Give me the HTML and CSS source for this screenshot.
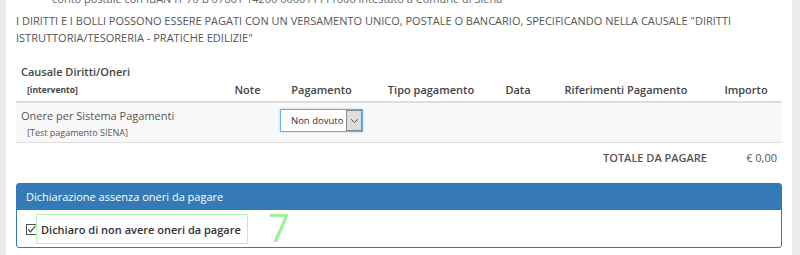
FILE: index.html
```html
<!DOCTYPE html>
<html lang="it">

<head>
    <meta charset="UTF-8">
    <meta name="viewport" content="width=device-width, initial-scale=1.0">
    <title>Pagamento oneri</title>
    <link rel="stylesheet" href="styles.css">
</head>

<body>
    <div class="side side-left"></div>
    <main class="content">
        <p class="cut-line">conto postale con IBAN IT 70 B 07601 14200 000011111000 intestato a Comune di Siena</p>
        <p class="notice">I DIRITTI E I BOLLI POSSONO ESSERE PAGATI CON UN VERSAMENTO UNICO, POSTALE O BANCARIO, SPECIFICANDO NELLA CAUSALE "DIRITTI ISTRUTTORIA/TESORERIA - PRATICHE EDILIZIE"</p>

        <table class="oneri">
            <colgroup>
                <col class="c-causale">
                <col class="c-note">
                <col class="c-pag">
                <col class="c-tipo">
                <col class="c-data">
                <col class="c-rif">
                <col class="c-imp">
            </colgroup>
            <thead>
                <tr>
                    <th class="left">Causale Diritti/Oneri<br><span class="sub">[intervento]</span></th>
                    <th>Note</th>
                    <th>Pagamento</th>
                    <th>Tipo pagamento</th>
                    <th>Data</th>
                    <th>Riferimenti Pagamento</th>
                    <th>Importo</th>
                </tr>
            </thead>
            <tbody>
                <tr class="row-onere">
                    <td>Onere per Sistema Pagamenti<br><span class="sub-note">[Test pagamento SIENA]</span></td>
                    <td></td>
                    <td>
                        <div class="select">
                            <span class="select-value">Non dovuto</span>
                            <span class="select-arrow">
                                <svg width="9" height="6" viewBox="0 0 9 6"><path d="M1 1.2 L4.5 4.5 L8 1.2" fill="none" stroke="#555" stroke-width="1"/></svg>
                            </span>
                        </div>
                    </td>
                    <td></td>
                    <td></td>
                    <td></td>
                    <td></td>
                </tr>
                <tr class="row-total">
                    <td colspan="6" class="right">TOTALE DA PAGARE</td>
                    <td class="right">€ 0,00</td>
                </tr>
            </tbody>
        </table>

        <section class="panel">
            <div class="panel-heading">Dichiarazione assenza oneri da pagare</div>
            <div class="panel-body">
                <label class="check">
                    <svg width="11" height="11" viewBox="0 0 11 11"><rect x="0.5" y="0.5" width="10" height="10" fill="#fff" stroke="#555"/><path d="M2.2 5.4 L4.4 7.8 L9.4 2" fill="none" stroke="#333" stroke-width="1.1"/></svg>
                    <span>Dichiaro di non avere oneri da pagare</span>
                </label>
                <div class="mark-box"></div>
                <div class="mark-num">7</div>
            </div>
        </section>
    </main>
    <div class="side side-right"></div>
</body>

</html>
```

FILE: styles.css
```css
*,
*::after,
*::before {
    box-sizing: border-box;
    padding: 0;
    margin: 0;
}

body {
    display: flex;
    height: 255px;
    overflow: hidden;
    background-color: #fff;
    font-family: "Open Sans", Arial, sans-serif;
    color: #555;
}

.side {
    background-color: #ebebeb;
    flex: none;
}

.side-left {
    width: 6px;
}

.side-right {
    width: 8px;
}

.content {
    flex: 1;
    padding: 0 10px;
}

.cut-line {
    margin-top: -8px;
    padding-left: 36px;
    font-size: 11px;
    line-height: 14px;
    color: #666;
}

.notice {
    margin-top: 6px;
    font-size: 11px;
    line-height: 17px;
    color: #555;
}

/* Tabella oneri */
.oneri {
    width: 100%;
    margin-top: 17px;
    border-collapse: collapse;
    font-size: 11px;
    table-layout: fixed;
}

.c-causale { width: 204px; }
.c-note { width: 55px; }
.c-pag { width: 93px; }
.c-tipo { width: 126px; }
.c-data { width: 48px; }
.c-rif { width: 168px; }
.c-imp { width: 72px; }

.oneri th {
    font-weight: 600;
    color: #444;
    text-align: center;
    vertical-align: bottom;
    padding: 0 5px 3px;
    line-height: 17px;
    border-bottom: 2px solid #ddd;
}

.oneri th.left {
    text-align: left;
}

.oneri th .sub {
    font-size: 8.5px;
    font-weight: 700;
    padding-left: 6px;
}

.oneri td {
    padding: 0 5px;
    vertical-align: top;
}

.row-onere td {
    background-color: #f9f9f9;
    border-bottom: 1px solid #ddd;
    padding-top: 5px;
    height: 40px;
    line-height: 16px;
    color: #555;
}

.sub-note {
    font-size: 9px;
    padding-left: 6px;
    line-height: 17px;
}

.select {
    display: flex;
    width: 83px;
    height: 23px;
    margin-top: 1px;
    border: 1px solid #66afe9;
    background-color: #fff;
    box-shadow: 0 0 2px rgba(102, 175, 233, 0.6);
}

.select-value {
    flex: 1;
    padding-left: 10px;
    line-height: 21px;
    font-size: 9.5px;
    color: #333;
    white-space: nowrap;
}

.select-arrow {
    width: 16px;
    display: flex;
    align-items: center;
    justify-content: center;
    background-color: #ddd;
    border: 1px solid #888;
}

.row-total td {
    font-size: 11px;
    padding-top: 7px;
    height: 30px;
    color: #555;
}

.row-total td.right {
    text-align: right;
}

.row-total td:first-child {
    font-weight: 600;
    padding-right: 3px;
}

/* Pannello dichiarazione */
.panel {
    margin-top: 11px;
    border: 1px solid #337ab7;
    border-radius: 3px;
}

.panel-heading {
    height: 26px;
    background-color: #337ab7;
    color: #fff;
    font-size: 11px;
    line-height: 25px;
    padding-left: 9px;
}

.panel-body {
    position: relative;
    height: 37px;
    padding: 12px 9px 0;
}

.check {
    display: flex;
    align-items: center;
    gap: 4px;
    font-size: 11px;
    font-weight: 600;
    color: #333;
}

.check svg {
    flex: none;
}

.mark-box {
    position: absolute;
    left: 19px;
    top: 4px;
    width: 212px;
    height: 30px;
    border: 1.5px solid #b2f5b2;
}

.mark-num {
    position: absolute;
    left: 251px;
    top: -3px;
    font-size: 38px;
    line-height: 40px;
    color: #98f098;
    font-family: "Open Sans", sans-serif;
}
```
